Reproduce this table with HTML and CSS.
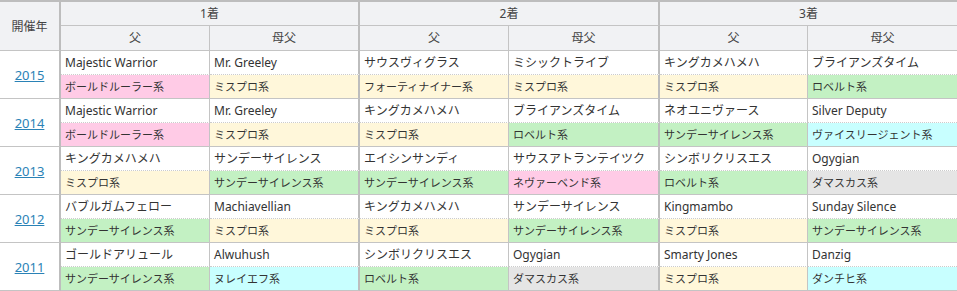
FILE: index.html
```html
<!DOCTYPE html>
<html lang="ja">
<head>
<meta charset="utf-8">
<title>血統傾向</title>
<link rel="stylesheet" href="styles.css">
</head>
<body>
<table class="pedigree">
  <colgroup>
    <col class="c-year">
    <col class="c-sire">
    <col class="c-dam">
    <col class="c-sire">
    <col class="c-dam2">
    <col class="c-sire3">
    <col class="c-dam3">
  </colgroup>
  <thead>
    <tr class="h1">
      <th rowspan="2" class="year-h">開催年</th>
      <th colspan="2" class="grp">1着</th>
      <th colspan="2" class="grp">2着</th>
      <th colspan="2" class="grp last">3着</th>
    </tr>
    <tr class="h2">
      <th class="sub">父</th><th class="sub dam">母父</th>
      <th class="sub">父</th><th class="sub dam">母父</th>
      <th class="sub">父</th><th class="sub dam last">母父</th>
    </tr>
  </thead>
  <tbody>
    <tr class="name-row">
      <td rowspan="2" class="year"><a href="#">2015</a></td>
      <td class="nm">Majestic Warrior</td><td class="nm dam">Mr. Greeley</td>
      <td class="nm">サウスヴィグラス</td><td class="nm dam">ミシックトライブ</td>
      <td class="nm">キングカメハメハ</td><td class="nm dam last">ブライアンズタイム</td>
    </tr>
    <tr class="line-row">
      <td class="ln pink">ボールドルーラー系</td><td class="ln dam yellow">ミスプロ系</td>
      <td class="ln yellow">フォーティナイナー系</td><td class="ln dam yellow">ミスプロ系</td>
      <td class="ln yellow">ミスプロ系</td><td class="ln dam last green">ロベルト系</td>
    </tr>
    <tr class="name-row">
      <td rowspan="2" class="year"><a href="#">2014</a></td>
      <td class="nm">Majestic Warrior</td><td class="nm dam">Mr. Greeley</td>
      <td class="nm">キングカメハメハ</td><td class="nm dam">ブライアンズタイム</td>
      <td class="nm">ネオユニヴァース</td><td class="nm dam last">Silver Deputy</td>
    </tr>
    <tr class="line-row">
      <td class="ln pink">ボールドルーラー系</td><td class="ln dam yellow">ミスプロ系</td>
      <td class="ln yellow">ミスプロ系</td><td class="ln dam green">ロベルト系</td>
      <td class="ln green">サンデーサイレンス系</td><td class="ln dam last cyan">ヴァイスリージェント系</td>
    </tr>
    <tr class="name-row">
      <td rowspan="2" class="year"><a href="#">2013</a></td>
      <td class="nm">キングカメハメハ</td><td class="nm dam">サンデーサイレンス</td>
      <td class="nm">エイシンサンディ</td><td class="nm dam">サウスアトランテイツク</td>
      <td class="nm">シンボリクリスエス</td><td class="nm dam last">Ogygian</td>
    </tr>
    <tr class="line-row">
      <td class="ln yellow">ミスプロ系</td><td class="ln dam green">サンデーサイレンス系</td>
      <td class="ln green">サンデーサイレンス系</td><td class="ln dam pink">ネヴァーベンド系</td>
      <td class="ln green">ロベルト系</td><td class="ln dam last grey">ダマスカス系</td>
    </tr>
    <tr class="name-row">
      <td rowspan="2" class="year"><a href="#">2012</a></td>
      <td class="nm">バブルガムフェロー</td><td class="nm dam">Machiavellian</td>
      <td class="nm">キングカメハメハ</td><td class="nm dam">サンデーサイレンス</td>
      <td class="nm">Kingmambo</td><td class="nm dam last">Sunday Silence</td>
    </tr>
    <tr class="line-row">
      <td class="ln green">サンデーサイレンス系</td><td class="ln dam yellow">ミスプロ系</td>
      <td class="ln yellow">ミスプロ系</td><td class="ln dam green">サンデーサイレンス系</td>
      <td class="ln yellow">ミスプロ系</td><td class="ln dam last green">サンデーサイレンス系</td>
    </tr>
    <tr class="name-row">
      <td rowspan="2" class="year"><a href="#">2011</a></td>
      <td class="nm">ゴールドアリュール</td><td class="nm dam">Alwuhush</td>
      <td class="nm">シンボリクリスエス</td><td class="nm dam">Ogygian</td>
      <td class="nm">Smarty Jones</td><td class="nm dam last">Danzig</td>
    </tr>
    <tr class="line-row">
      <td class="ln green">サンデーサイレンス系</td><td class="ln dam cyan">ヌレイエフ系</td>
      <td class="ln green">ロベルト系</td><td class="ln dam grey">ダマスカス系</td>
      <td class="ln yellow">ミスプロ系</td><td class="ln dam last cyan">ダンチヒ系</td>
    </tr>
  </tbody>
</table>
</body>
</html>
```

FILE: styles.css
```css
html, body {
  margin: 0;
  padding: 0;
  background: #ffffff;
  overflow: hidden;
}

.pedigree {
  width: 957px;
  table-layout: fixed;
  border-collapse: separate;
  border-spacing: 0;
  border-top: 2px solid #bdbdbd;
  font-family: "Noto Sans", "Noto Sans CJK JP", sans-serif;
  color: #333333;
}

.c-year { width: 61px; }
.c-sire { width: 149px; }
.c-dam { width: 150px; }
.c-dam2 { width: 151px; }
.c-sire3 { width: 148px; }
.c-dam3 { width: 149px; }

.pedigree th {
  background: #f1f2f4;
  font-weight: normal;
  font-size: 12px;
  color: #444444;
  text-align: center;
  padding: 0;
  border-bottom: 1px solid #c4c4c4;
}

.h1 th { height: 23px; line-height: 23px; }
.h2 th { height: 24px; line-height: 24px; }

.year-h {
  border-right: 2px solid #bdbdbd;
  font-size: 13px;
}

.grp { border-right: 2px solid #bdbdbd; }
.sub { border-right: 1px solid #c4c4c4; }
.sub.dam { border-right: 2px solid #bdbdbd; }
.last { border-right: none !important; }

.pedigree td {
  padding: 0 4px;
  height: 23px;
  white-space: nowrap;
  overflow: hidden;
  border-right: 1px solid #c4c4c4;
}

.pedigree td.dam { border-right: 2px solid #bdbdbd; }

.year {
  text-align: center;
  border-right: 2px solid #bdbdbd !important;
  border-bottom: 1px solid #c4c4c4;
  font-size: 13px;
}

.year a {
  color: #2a82b6;
  text-decoration: underline;
}

.nm {
  font-size: 12px;
  line-height: 23px;
  border-bottom: 1px dotted #cccccc;
}

.ln {
  font-size: 11px;
  line-height: 23px;
  border-bottom: 1px solid #c4c4c4;
}

.pink { background: #ffcbe6; }
.yellow { background: #fff7da; }
.green { background: #c3f1c3; }
.cyan { background: #c8ffff; }
.grey { background: #e5e5e5; }
```
